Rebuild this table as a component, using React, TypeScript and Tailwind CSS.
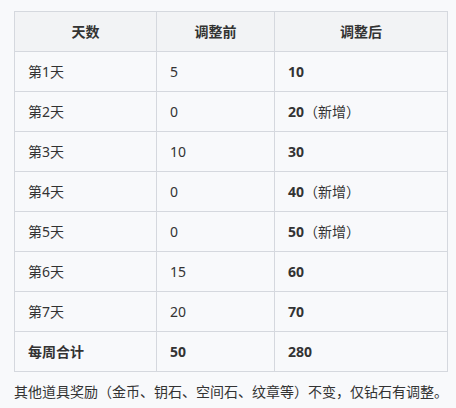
import React from 'react';

const rows = [
    { day: '第1天', before: '5', after: '10', isNew: false },
    { day: '第2天', before: '0', after: '20', isNew: true },
    { day: '第3天', before: '10', after: '30', isNew: false },
    { day: '第4天', before: '0', after: '40', isNew: true },
    { day: '第5天', before: '0', after: '50', isNew: true },
    { day: '第6天', before: '15', after: '60', isNew: false },
    { day: '第7天', before: '20', after: '70', isNew: false },
];

export default function App() {
    return (
        <div
            className="w-[456px] h-[408px] bg-[#f8f9fb] pt-[11px] pl-[14px] text-[#333333] text-[14px]"
            style={{ fontFamily: '"Noto Sans", "Noto Sans CJK SC", sans-serif' }}>
            <table className="border-collapse table-fixed w-[433px]">
                <colgroup>
                    <col className="w-[142px]" />
                    <col className="w-[118px]" />
                    <col className="w-[173px]" />
                </colgroup>
                <thead>
                    <tr className="h-[40px] bg-[#f2f3f5]">
                        <th className="border border-[#d5d8de] text-center font-semibold">天数</th>
                        <th className="border border-[#d5d8de] text-center font-semibold">调整前</th>
                        <th className="border border-[#d5d8de] text-center font-semibold">调整后</th>
                    </tr>
                </thead>
                <tbody>
                    {rows.map((row) => (
                        <tr key={row.day} className="h-[40px]">
                            <td className="border border-[#d5d8de] px-[13px]">{row.day}</td>
                            <td className="border border-[#d5d8de] px-[13px]">{row.before}</td>
                            <td className="border border-[#d5d8de] px-[13px]">
                                <span className="font-bold">{row.after}</span>
                                {row.isNew && <span>（新增）</span>}
                            </td>
                        </tr>
                    ))}
                    <tr className="h-[40px]">
                        <td className="border border-[#d5d8de] px-[13px] font-bold">每周合计</td>
                        <td className="border border-[#d5d8de] px-[13px] font-bold">50</td>
                        <td className="border border-[#d5d8de] px-[13px] font-bold">280</td>
                    </tr>
                </tbody>
            </table>
            <p className="mt-[9px] leading-[22px] whitespace-nowrap">
                其他道具奖励（金币、钥石、空间石、纹章等）不变，仅钻石有调整。
            </p>
        </div>
    );
}
